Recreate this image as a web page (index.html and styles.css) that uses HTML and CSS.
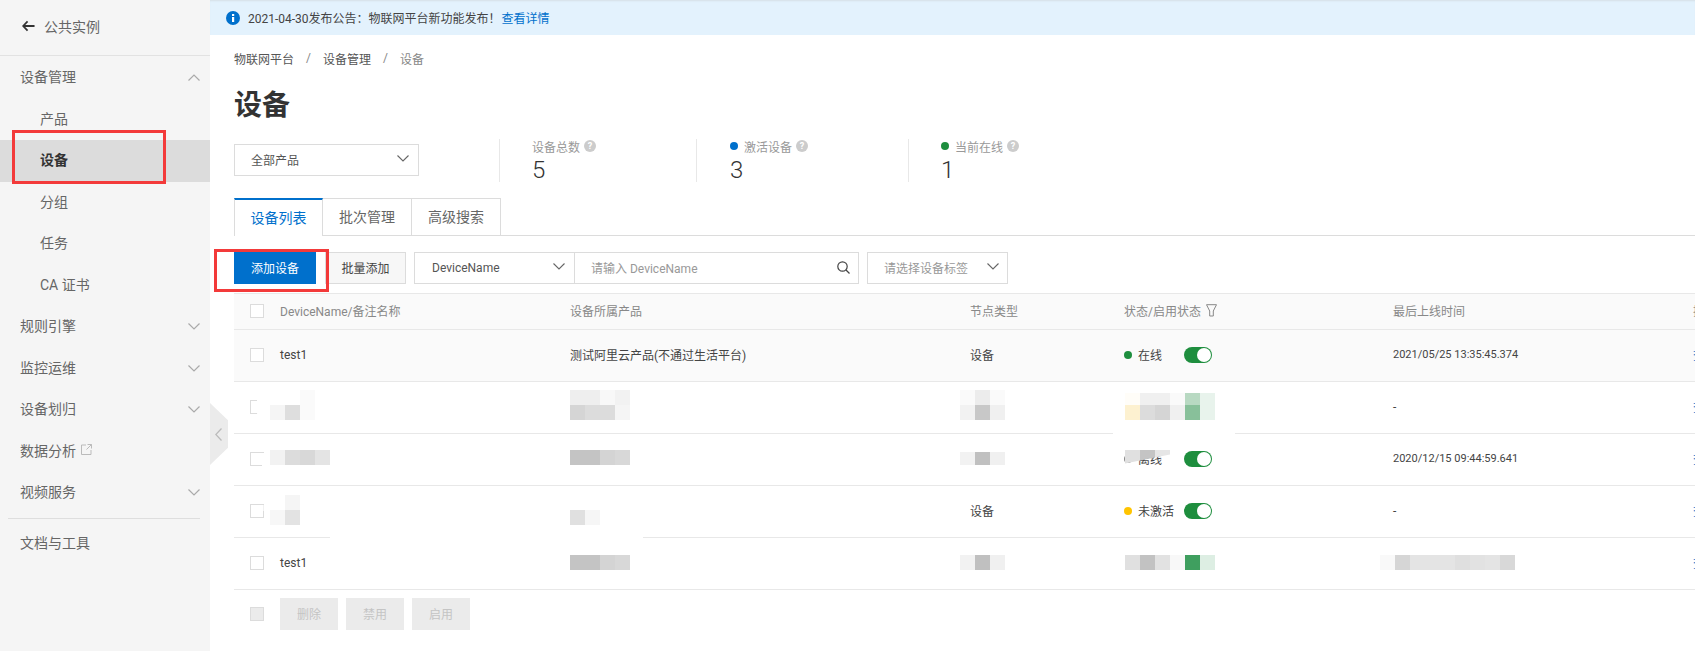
FILE: index.html
```html
<!DOCTYPE html>
<html lang="zh-CN">
<head>
<meta charset="utf-8">
<title>设备</title>
<link rel="stylesheet" href="styles.css">
</head>
<body>
<div class="app">
  <aside class="sidebar">
    <div class="back">
      <svg class="back-icon" viewBox="0 0 14 12"><path d="M6 1 1.2 6 6 11M1.500 6H13.500" fill="none" stroke="#333" stroke-width="1.900"/></svg>
      <span>公共实例</span>
    </div>
    <nav class="nav">
      <div class="nav-item">设备管理<svg class="chev" viewBox="0 0 12 7"><path d="M.5 6.5 6 1l5.500 5.500" fill="none" stroke="#aaa" stroke-width="1.200"/></svg></div>
      <div class="nav-item sub">产品</div>
      <div class="nav-item sub active">设备</div>
      <div class="nav-item sub">分组</div>
      <div class="nav-item sub">任务</div>
      <div class="nav-item sub">CA 证书</div>
      <div class="nav-item">规则引擎<svg class="chev" viewBox="0 0 12 7"><path d="M.5.5 6 6 11.500.5" fill="none" stroke="#aaa" stroke-width="1.200"/></svg></div>
      <div class="nav-item">监控运维<svg class="chev" viewBox="0 0 12 7"><path d="M.5.5 6 6 11.500.5" fill="none" stroke="#aaa" stroke-width="1.200"/></svg></div>
      <div class="nav-item">设备划归<svg class="chev" viewBox="0 0 12 7"><path d="M.5.5 6 6 11.500.5" fill="none" stroke="#aaa" stroke-width="1.200"/></svg></div>
      <div class="nav-item">数据分析<svg class="ext" viewBox="0 0 11 11"><path d="M5 1H.5v9.500H10V6M6.500.5h4v4M10.500.5 5.500 5.500" fill="none" stroke="#bbb" stroke-width="1"/></svg></div>
      <div class="nav-item">视频服务<svg class="chev" viewBox="0 0 12 7"><path d="M.5.5 6 6 11.500.5" fill="none" stroke="#aaa" stroke-width="1.200"/></svg></div>
    </nav>
    <div class="nav-divider"></div>
    <div class="nav-item">文档与工具</div>
  </aside>

  <main class="main">
    <div class="notice">
      <svg class="info" viewBox="0 0 14 14"><circle cx="7" cy="7" r="7" fill="#0070cc"/><rect x="6" y="6" width="2.200" height="5" fill="#fff"/><rect x="6" y="3" width="2.200" height="2" fill="#fff"/></svg>
      <span>2021-04-30发布公告：物联网平台新功能发布！</span><a class="link">查看详情</a>
    </div>
    <div class="content">
      <div class="crumbs"><span>物联网平台</span><i>/</i><span>设备管理</span><i>/</i><span class="crumb-last">设备</span></div>
      <h1 class="title">设备</h1>

      <div class="summary">
        <div class="select product-select">全部产品<svg class="chev-s" viewBox="0 0 12 7"><path d="M.5.5 6 6 11.500.5" fill="none" stroke="#666" stroke-width="1.100"/></svg></div>
        <div class="stat stat-total">
          <div class="stat-label">设备总数<svg class="help" viewBox="0 0 12 12"><circle cx="6" cy="6" r="6" fill="#ccc"/><text x="6" y="9.200" text-anchor="middle" class="help-mark">?</text></svg></div>
          <div class="stat-num">5</div>
        </div>
        <div class="stat stat-active">
          <div class="stat-label"><b class="dot dot-blue"></b>激活设备<svg class="help" viewBox="0 0 12 12"><circle cx="6" cy="6" r="6" fill="#ccc"/><text x="6" y="9.200" text-anchor="middle" class="help-mark">?</text></svg></div>
          <div class="stat-num">3</div>
        </div>
        <div class="stat stat-online">
          <div class="stat-label"><b class="dot dot-green"></b>当前在线<svg class="help" viewBox="0 0 12 12"><circle cx="6" cy="6" r="6" fill="#ccc"/><text x="6" y="9.200" text-anchor="middle" class="help-mark">?</text></svg></div>
          <div class="stat-num">1</div>
        </div>
      </div>

      <div class="tabs">
        <div class="tab tab-on">设备列表</div>
        <div class="tab">批次管理</div>
        <div class="tab">高级搜索</div>
      </div>

      <div class="toolbar">
        <button class="btn btn-primary">添加设备</button>
        <button class="btn btn-plain">批量添加</button>
        <div class="combo">
          <div class="select name-select">DeviceName<svg class="chev-s" viewBox="0 0 12 7"><path d="M.5.5 6 6 11.500.5" fill="none" stroke="#666" stroke-width="1.100"/></svg></div>
          <div class="search"><span>请输入 DeviceName</span><svg class="search-icon" viewBox="0 0 13 13"><circle cx="5.500" cy="5.500" r="4.700" fill="none" stroke="#444" stroke-width="1.200"/><path d="m9 9 3.500 3.500" stroke="#444" stroke-width="1.300"/></svg></div>
        </div>
        <div class="select tag-select">请选择设备标签<svg class="chev-s" viewBox="0 0 12 7"><path d="M.5.5 6 6 11.500.5" fill="none" stroke="#666" stroke-width="1.100"/></svg></div>
      </div>

      <div class="table">
        <div class="row head">
          <div class="cell"><span class="check"></span></div>
          <div class="cell">DeviceName/备注名称</div>
          <div class="cell">设备所属产品</div>
          <div class="cell">节点类型</div>
          <div class="cell">状态/启用状态<svg class="filter" viewBox="0 0 11 13"><path d="M.5.700h10L7.300 7v5H3.700V7z" fill="none" stroke="#888" stroke-width="1"/></svg></div>
          <div class="cell">最后上线时间</div>
          <div class="cell">操作</div>
        </div>
        <div class="row hover">
          <div class="cell"><span class="check"></span></div>
          <div class="cell">test1</div>
          <div class="cell">测试阿里云产品(不通过生活平台)</div>
          <div class="cell">设备</div>
          <div class="cell"><b class="dot dot-green"></b><span class="state">在线</span><span class="toggle"></span></div>
          <div class="cell time">2021/05/25 13:35:45.374</div>
          <div class="cell link">查看</div>
        </div>
        <div class="row">
          <div class="cell"><span class="check"></span></div>
          <div class="cell"></div><div class="cell"></div><div class="cell"></div><div class="cell"></div>
          <div class="cell">-</div>
          <div class="cell link">查看</div>
        </div>
        <div class="row">
          <div class="cell"><span class="check"></span></div>
          <div class="cell"></div><div class="cell"></div><div class="cell"></div>
          <div class="cell"><b class="dot dot-grey"></b><span class="state">离线</span><span class="toggle"></span></div>
          <div class="cell time">2020/12/15 09:44:59.641</div>
          <div class="cell link">查看</div>
        </div>
        <div class="row">
          <div class="cell"><span class="check"></span></div>
          <div class="cell"></div><div class="cell"></div>
          <div class="cell">设备</div>
          <div class="cell"><b class="dot dot-yellow"></b><span class="state">未激活</span><span class="toggle"></span></div>
          <div class="cell">-</div>
          <div class="cell link">查看</div>
        </div>
        <div class="row">
          <div class="cell"><span class="check"></span></div>
          <div class="cell">test1</div>
          <div class="cell"></div><div class="cell"></div><div class="cell"></div><div class="cell"></div>
          <div class="cell link">查看</div>
        </div>

        <div class="smudge s-check2"></div>
        <div class="smudge s-check3"></div>
        <div class="smudge s-check4"></div>
        <div class="smudge s-line4"></div>
        <div class="smudge s-line2"></div>

        <div class="mosaic cols3 m-name2"><i class="c-ff"></i><i class="c-ff"></i><i class="c-fa"></i><i class="c-f5"></i><i class="c-de"></i><i class="c-fa"></i></div>
        <div class="mosaic cols4 m-name3"><i class="c-f2"></i><i class="c-dc"></i><i class="c-d8"></i><i class="c-e4"></i></div>
        <div class="mosaic cols2 m-name4"><i class="c-ff"></i><i class="c-f5"></i><i class="c-f7"></i><i class="c-e3"></i></div>
        <div class="mosaic cols4 m-prod2"><i class="c-ee"></i><i class="c-ee"></i><i class="c-f8"></i><i class="c-f2"></i><i class="c-d5"></i><i class="c-dc"></i><i class="c-dc"></i><i class="c-f5"></i></div>
        <div class="mosaic cols4 m-prod3"><i class="c-c4"></i><i class="c-c4"></i><i class="c-d4"></i><i class="c-d8"></i></div>
        <div class="mosaic cols2 m-prod4"><i class="c-e0"></i><i class="c-f6"></i></div>
        <div class="mosaic cols4 m-prod5"><i class="c-c4"></i><i class="c-c4"></i><i class="c-d4"></i><i class="c-d8"></i></div>
        <div class="mosaic cols3 m-node2"><i class="c-fa"></i><i class="c-ec"></i><i class="c-fa"></i><i class="c-f2"></i><i class="c-c8"></i><i class="c-f0"></i></div>
        <div class="mosaic cols3 m-node3"><i class="c-f2"></i><i class="c-c0"></i><i class="c-f0"></i></div>
        <div class="mosaic cols3 m-node5"><i class="c-f2"></i><i class="c-c0"></i><i class="c-f0"></i></div>
        <div class="mosaic cols6 m-stat2"><i class="c-warm1"></i><i class="c-f0"></i><i class="c-f0"></i><i class="c-fa"></i><i class="c-green1"></i><i class="c-green2"></i><i class="c-warm2"></i><i class="c-dc"></i><i class="c-d5"></i><i class="c-f0"></i><i class="c-green3"></i><i class="c-green2"></i></div>
        <div class="mosaic cols3 m-stat3"><i class="c-e0"></i><i class="c-c4"></i><i class="c-e6"></i></div>
        <div class="mosaic cols6 m-stat5"><i class="c-e0"></i><i class="c-c2"></i><i class="c-e2"></i><i class="c-f8"></i><i class="c-green4"></i><i class="c-green5"></i></div>
        <div class="mosaic cols9 m-time5"><i class="c-f9"></i><i class="c-d6"></i><i class="c-e4"></i><i class="c-e4"></i><i class="c-e4"></i><i class="c-df"></i><i class="c-e2"></i><i class="c-e4"></i><i class="c-d8"></i></div>
      </div>

      <div class="bulk">
        <span class="check check-off"></span>
        <button class="btn btn-off">删除</button>
        <button class="btn btn-off">禁用</button>
        <button class="btn btn-off">启用</button>
      </div>
    </div>
    <div class="collapse"><svg viewBox="0 0 7 13"><path d="M6.500.5.800 6.500l5.700 6" fill="none" stroke="#bbb" stroke-width="1.300"/></svg></div>
  </main>

  <div class="mark mark-nav"></div>
  <div class="mark mark-add"></div>
</div>
</body>
</html>
```

FILE: styles.css
```css
* { box-sizing: border-box; }
html, body { margin: 0; height: 100%; overflow: hidden; background: #fff; }
body { font-family: Roboto, "Noto Sans CJK SC", sans-serif; font-size: 12px; color: #444; }
.app { position: relative; display: flex; height: 651px; width: 1695px; overflow: hidden; }

/* sidebar */
.sidebar { flex: 0 0 210px; background: #f5f5f5; color: #666; font-size: 14px; }
.back { display: flex; align-items: center; gap: 9px; height: 56px; padding: 0 0 3px 22px; border-bottom: 1px solid #e2e2e2; }
.back-icon { width: 13px; height: 12px; }
.nav { padding-top: 1px; }
.nav-item { display: flex; align-items: center; height: 41.5px; padding: 0 0 3px 20px; position: relative; }
.sub { padding-left: 40px; }
.active { background: #dcdcdc; color: #333; font-weight: 700; }
.chev { position: absolute; left: 188px; top: 17px; width: 12px; height: 7px; }
.ext { width: 11px; height: 11px; margin-left: 5px; }
.nav-divider { height: 1px; background: #dedede; margin: 4px 10px 4px 8px; }

/* main */
.main { flex: 1; min-width: 0; position: relative; overflow: hidden; }
.notice { display: flex; align-items: center; height: 35px; padding-left: 16px; background: #e3f2fd; box-shadow: inset 0 2px 2px -1px #d5dfe6; }
.info { width: 14px; height: 14px; margin-right: 8px; }
.link { color: #0070cc; }
.notice .link { margin-left: 1px; }
.content { padding-left: 24px; }

.crumbs { display: flex; align-items: center; height: 20px; margin-top: 13px; color: #555; }
.crumbs i { font-style: normal; color: #888; width: 29px; text-align: center; }
.crumb-last { color: #888; }
.title { margin: 18px 0 0; height: 38px; font-size: 28px; line-height: 40px; font-weight: 700; color: #333; }

.summary { display: flex; height: 43px; margin-top: 15px; }
.select { display: flex; align-items: center; justify-content: space-between; height: 32px; padding-bottom: 1px; border: 1px solid #dcdcdc; background: #fff; color: #555; }
.product-select { width: 185px; margin-top: 5px; padding-left: 16px; padding-right: 9px; }
.chev-s { width: 12px; height: 7px; margin-top: -3px; }
.stat { border-left: 1px solid #e8e8e8; height: 43px; }
.stat-total { margin-left: 80px; width: 197px; padding-left: 32px; }
.stat-active { width: 212px; padding-left: 33px; }
.stat-online { width: 200px; padding-left: 32px; }
.stat-label { display: flex; align-items: center; height: 14px; color: #999; }
.stat-num { font-size: 24px; line-height: 30px; margin-top: 2px; color: #333; font-weight: 300; }
.help { width: 12px; height: 12px; margin-left: 4px; }
.help-mark { font-size: 9px; fill: #fff; font-weight: 700; }
.dot { display: inline-block; width: 8px; height: 8px; border-radius: 50%; margin-right: 6px; flex: none; }
.dot-blue { background: #0070cc; }
.dot-green { background: #1e8e3e; }
.dot-yellow { background: #ffc400; }
.dot-grey { background: #888; }

.tabs { display: flex; margin-top: 16px; height: 38px; border-bottom: 1px solid #dcdcdc; font-size: 14px; color: #666; }
.tab { width: 89px; height: 37px; padding-bottom: 3px; display: flex; align-items: center; justify-content: center; border: 1px solid #dcdcdc; border-left: 0; border-bottom: 0; }
.tab-on { width: 89px; height: 38px; border-left: 1px solid #dcdcdc; border-top: 2px solid #0070cc; color: #0070cc; background: #fff; }

.toolbar { display: flex; margin-top: 16px; height: 32px; }
.btn { height: 32px; border: 0; padding: 0 0 2px; font: inherit; }
.btn-primary { width: 82px; background: #0070cc; color: #fff; }
.btn-plain { width: 81px; margin-left: 9px; background: #f7f7f7; border: 1px solid #dcdcdc; color: #444; }
.combo { display: flex; margin-left: 8px; }
.name-select { width: 160px; padding-left: 17px; padding-right: 9px; border-right: 0; }
.search { width: 285px; height: 32px; display: flex; align-items: center; justify-content: space-between; padding: 0 8px 1px 16px; border: 1px solid #dcdcdc; color: #999; }
.search-icon { width: 13px; height: 13px; }
.tag-select { width: 141px; margin-left: 8px; padding-left: 16px; padding-right: 8px; color: #999; }

/* table */
.table { position: relative; margin-top: 9px; width: 1600px; }
.row { display: grid; grid-template-columns: 46px 290px 400px 154px 269px 300px 120px; height: 52px; border-bottom: 1px solid #e8e8e8; color: #444; }
.head { height: 37px; background: #fafafa; border-top: 1px solid #e8e8e8; color: #888; }
.hover { background: #fafafa; }
.cell { display: flex; align-items: center; padding-bottom: 2px; white-space: nowrap; }
.time { font-size: 11px; }
.check { width: 14px; height: 14px; margin-left: 16px; border: 1px solid #dcdcdc; background: #fff; }
.filter { width: 11px; height: 13px; margin-left: 5px; }
.state { width: 46px; flex: none; }
.toggle { position: relative; display: block; width: 28px; height: 16px; border-radius: 8px; background: #1e8e3e; }
.toggle::after { content: ""; position: absolute; right: 1px; top: 1px; width: 14px; height: 14px; border-radius: 50%; background: #fff; }

/* mosaics painted over the table */
.mosaic { position: absolute; display: grid; grid-auto-rows: 15px; }
.mosaic i { display: block; }
.cols2 { grid-template-columns: repeat(2, 15px); }
.cols3 { grid-template-columns: repeat(3, 15px); }
.cols4 { grid-template-columns: repeat(4, 15px); }
.cols6 { grid-template-columns: repeat(6, 15px); }
.cols9 { grid-template-columns: repeat(9, 15px); }
.m-name2 { left: 36px; top: 97px; }
.m-name3 { left: 36px; top: 157px; }
.m-name4 { left: 36px; top: 202px; }
.m-prod2 { left: 336px; top: 97px; }
.m-prod3 { left: 336px; top: 157px; }
.m-prod4 { left: 336px; top: 217px; }
.m-prod5 { left: 336px; top: 262px; }
.m-node2 { left: 726px; top: 97px; }
.m-node3 { left: 726px; top: 159px; grid-auto-rows: 13px; }
.m-node5 { left: 726px; top: 262px; }
.m-stat2 { left: 891px; top: 100px; grid-auto-rows: 12px 15px; }
.m-stat3 { left: 891px; top: 157px; clip-path: polygon(0 0, 100% 0, 100% 30%, 0 90%); }
.m-stat5 { left: 891px; top: 262px; }
.m-time5 { left: 1146px; top: 262px; }
.c-ff { background: #fff; } .c-fa { background: #fafafa; } .c-f9 { background: #f9f9f9; }
.c-f8 { background: #f8f8f8; } .c-f7 { background: #f7f7f7; } .c-f6 { background: #f6f6f6; }
.c-f5 { background: #f5f5f5; } .c-f2 { background: #f2f2f2; } .c-f0 { background: #f0f0f0; }
.c-ee { background: #eee; } .c-ec { background: #ececec; } .c-e6 { background: #e6e6e6; }
.c-e4 { background: #e4e4e4; } .c-e3 { background: #e3e3e3; } .c-e2 { background: #e2e2e2; }
.c-e0 { background: #e0e0e0; } .c-df { background: #dfdfdf; } .c-de { background: #dedede; }
.c-dc { background: #dcdcdc; } .c-d8 { background: #d8d8d8; } .c-d6 { background: #d6d6d6; }
.c-d5 { background: #d5d5d5; } .c-d4 { background: #d4d4d4; } .c-c8 { background: #c8c8c8; }
.c-c4 { background: #c4c4c4; } .c-c2 { background: #c2c2c2; } .c-c0 { background: #c0c0c0; }
.c-warm1 { background: #fffdf8; } .c-warm2 { background: #fdf1d0; }
.c-green1 { background: #b8d9c2; } .c-green2 { background: #e8f3ec; } .c-green3 { background: #88c09a; }
.c-green4 { background: #3f9f5f; } .c-green5 { background: #ddeee3; }
.smudge { position: absolute; background: #fff; }
.s-check2 { left: 23px; top: 94px; width: 14px; height: 34px; border-radius: 5px 0 0 8px; }
.s-check3 { left: 28px; top: 160px; width: 9px; height: 20px; }
.s-check4 { left: 26px; top: 212px; width: 4px; height: 6px; opacity: .6; }
.s-line4 { left: 96px; top: 243px; width: 313px; height: 3px; }
.s-line2 { left: 879px; top: 138px; width: 122px; height: 4px; }

.bulk { display: flex; align-items: center; gap: 8px; height: 32px; margin-top: 8px; }
.check-off { background: #ebebeb; margin-right: 8px; }
.btn-off { width: 58px; background: #ebebeb; color: #c4c4c4; }

.collapse { position: absolute; left: 0; top: 403px; width: 18px; height: 62px; display: flex; align-items: center; padding-left: 5px; background: #ebebeb; clip-path: polygon(0 0, 100% 28%, 100% 72%, 0 100%); }
.collapse svg { width: 7px; height: 13px; }

/* annotation rectangles drawn on the screenshot */
.mark { position: absolute; border: 3px solid #f33a3a; }
.mark-nav { left: 12px; top: 130px; width: 154px; height: 54px; }
.mark-add { left: 214px; top: 249px; width: 115px; height: 43px; }
```
